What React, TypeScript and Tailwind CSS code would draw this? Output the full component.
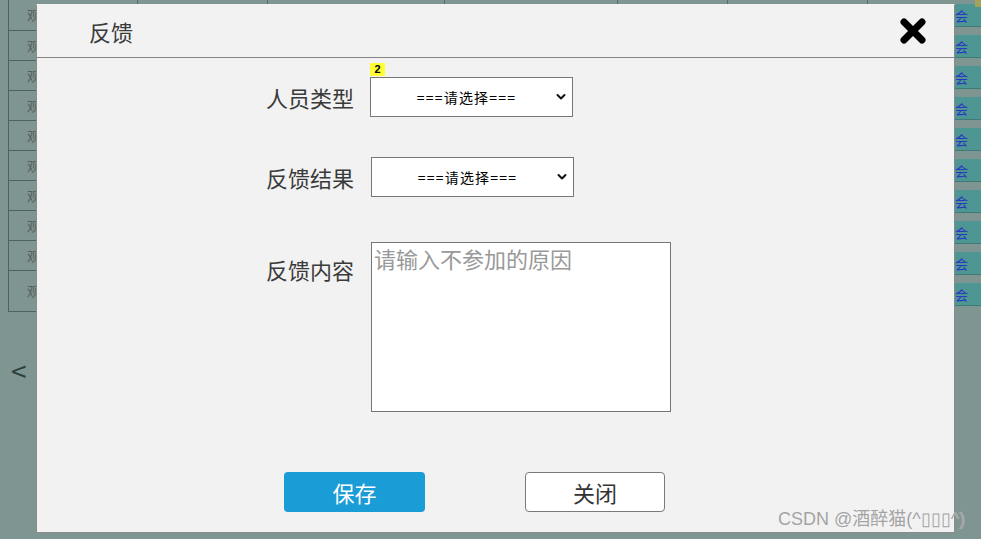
import React from 'react';

const ROWS = Array.from({ length: 10 }, (_, i) => i);

const CloseIcon = () => (
  <svg width="28" height="28" viewBox="0 0 28 28">
    <path d="M5 5 L23 23 M23 5 L5 23" stroke="#000" strokeWidth="7" strokeLinecap="round" />
  </svg>
);

const Chevron = () => (
  <svg width="10" height="7" viewBox="0 0 10 7" className="pointer-events-none absolute right-[7px] top-1/2 -translate-y-1/2">
    <path d="M1.5 1.5 L5 5 L8.5 1.5" stroke="#111" strokeWidth="2" fill="none" strokeLinecap="round" strokeLinejoin="round" />
  </svg>
);

const FakeSelect = ({ className = '' }: { className?: string }) => (
  <div className={`relative w-[203px] h-[40px] ${className}`}>
    <select
      defaultValue=""
      className="w-full h-full appearance-none bg-white border border-[#767676] text-[14px] text-black text-center [text-align-last:center] pr-[10px] tracking-[1.2px] outline-none"
    >
      <option value="">===请选择===</option>
    </select>
    <Chevron />
  </div>
);

export default function App() {
  return (
    <div className="relative w-[981px] h-[539px] overflow-hidden bg-[#7f9592] font-['Noto_Sans_CJK_SC',sans-serif]">
      {/* page behind the dialog */}
      <div className="flex">
        <div className="w-[955px] shrink-0">
          <div className="ml-[8px] border-l border-[#4f6260]">
            {ROWS.map((i) => (
              <div
                key={i}
                className={`grid grid-cols-[129px_130px_177px_173px_110px_140px_1fr] border-b border-[#4f6260] ${i === 9 ? 'h-[41px]' : 'h-[30px]'} ${i === 0 ? 'h-[31px]' : ''}`}
              >
                <div className="flex items-center pl-[18px] text-[13px] text-[#55625f] border-r border-[#5a6b69]">观</div>
                <div className="border-r border-[#5a6b69]" />
                <div className="border-r border-[#5a6b69]" />
                <div className="border-r border-[#5a6b69]" />
                <div className="border-r border-[#5a6b69]" />
                <div className="border-r border-[#5a6b69]" />
                <div />
              </div>
            ))}
          </div>
          <div className="mt-[44px] pl-[11px] text-[28px] leading-none text-[#2f3f3d]">&lt;</div>
        </div>
        <div className="w-[26px] shrink-0 pt-[4px] flex flex-col gap-[8px]">
          {ROWS.map((i) => (
            <div key={i} className="h-[23px] bg-[#4e9693] flex items-center text-[13px] leading-none text-[#2a36c0] border-b border-[#3f7a77]">
              会
            </div>
          ))}
        </div>
      </div>
      <div className="absolute right-0 top-0 w-[6px] h-[7px] bg-[#a3a35c]" />

      {/* dialog */}
      <div className="absolute left-[36px] top-[4px] w-[919px] h-[529px] bg-[#f2f2f2] border border-[#8a8a8a] border-t-[#f2f2f2]">
        <div className="h-[53px] flex items-center justify-between pl-[52px] pr-[27px] border-b border-[#858585]">
          <span className="text-[22px] text-[#3a3a3a]">反馈</span>
          <CloseIcon />
        </div>

        <div className="grid grid-cols-[317px_auto] gap-x-[16px] mt-[19px]">
          <div className="flex items-center justify-end text-[22px] text-[#3a3a3a]">人员类型</div>
          <div className="relative w-max">
            <span className="absolute left-0 -top-[14px] w-[15px] h-[13px] bg-[#ffff33] text-[11px] font-bold leading-[13px] text-center text-black font-['Liberation_Sans',sans-serif]">2</span>
            <FakeSelect />
          </div>

          <div className="flex items-center justify-end text-[22px] text-[#3a3a3a] mt-[40px]">反馈结果</div>
          <div className="mt-[40px]">
            <FakeSelect className="ml-px" />
          </div>

          <div className="flex justify-end text-[22px] text-[#3a3a3a] mt-[45px] pt-[11px]">反馈内容</div>
          <div className="mt-[45px]">
            <textarea
              placeholder="请输入不参加的原因"
              className="ml-px block w-[300px] h-[170px] resize-none bg-white border border-[#767676] px-[2px] py-[1px] text-[22px] leading-[1.35] text-[#333] placeholder:text-[#999] outline-none"
            />
          </div>
        </div>

        <div className="flex mt-[60px] pl-[247px]">
          <button className="w-[141px] h-[40px] rounded-[4px] bg-[#1a9cd6] text-white text-[22px]">保存</button>
          <button className="ml-[100px] w-[140px] h-[40px] rounded-[4px] bg-white border border-[#7a7a7a] text-[#333] text-[22px]">关闭</button>
        </div>
      </div>

      <div className="absolute left-[778px] top-[506px] text-[18px] text-[#a3a3a3] font-['Liberation_Sans','Noto_Sans_CJK_SC',sans-serif] [text-shadow:0_0_1px_rgba(255,255,255,0.6)]">
        CSDN @酒醉猫(^▯▯▯^)
      </div>
    </div>
  );
}
